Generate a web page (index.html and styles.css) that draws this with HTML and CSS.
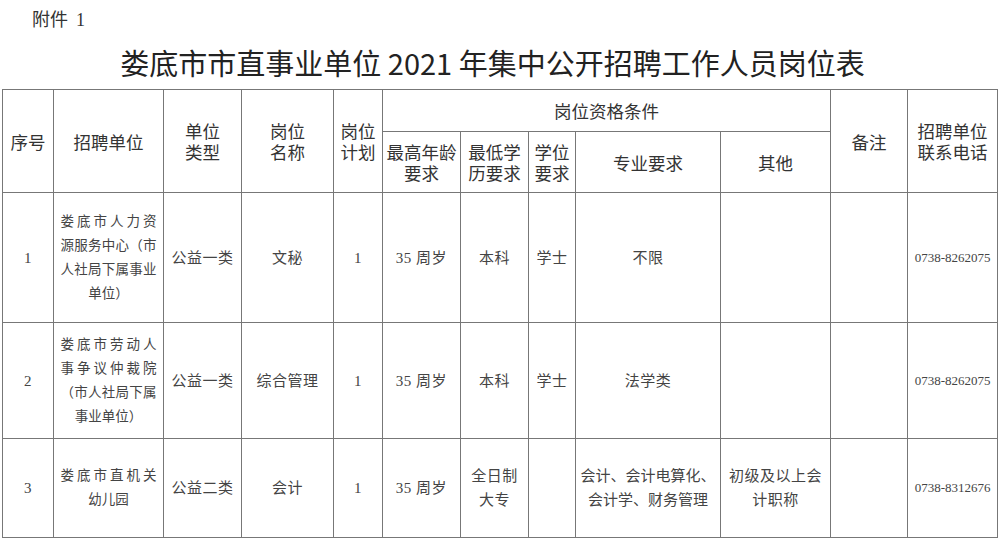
FILE: index.html
```html
<!DOCTYPE html>
<html lang="zh-CN">
<head>
<meta charset="utf-8">
<title>娄底市市直事业单位2021年集中公开招聘工作人员岗位表</title>
<link rel="stylesheet" href="styles.css">
</head>
<body>
<div class="doc">
  <div class="att">附件 <span class="num">1</span></div>
  <h1 class="title">娄底市市直事业单位 2021 年集中公开招聘工作人员岗位表</h1>
  <table class="grid">
    <colgroup>
      <col style="width:51px"><col style="width:110px"><col style="width:78px"><col style="width:92px">
      <col style="width:49px"><col style="width:78px"><col style="width:68px"><col style="width:47px">
      <col style="width:145px"><col style="width:110px"><col style="width:77px"><col style="width:90px">
    </colgroup>
    <thead>
      <tr class="hr1">
        <th rowspan="2">序号</th>
        <th rowspan="2">招聘单位</th>
        <th rowspan="2"><span class="ln">单位</span><span class="ln">类型</span></th>
        <th rowspan="2"><span class="ln">岗位</span><span class="ln">名称</span></th>
        <th rowspan="2"><span class="ln">岗位</span><span class="ln">计划</span></th>
        <th colspan="5">岗位资格条件</th>
        <th rowspan="2">备注</th>
        <th rowspan="2"><span class="ln">招聘单位</span><span class="ln">联系电话</span></th>
      </tr>
      <tr class="hr2">
        <th><span class="ln">最高年龄</span><span class="ln">要求</span></th>
        <th><span class="ln">最低学</span><span class="ln">历要求</span></th>
        <th><span class="ln">学位</span><span class="ln">要求</span></th>
        <th class="dark">专业要求</th>
        <th>其他</th>
      </tr>
    </thead>
    <tbody>
      <tr class="r1">
        <td class="num">1</td>
        <td><div class="unit"><span class="j">娄底市人力资</span><span class="j">源服务中心（市</span><span class="j">人社局下属事业</span><span>单位）</span></div></td>
        <td>公益一类</td>
        <td>文秘</td>
        <td class="num">1</td>
        <td><span class="num">35</span> 周岁</td>
        <td>本科</td>
        <td>学士</td>
        <td class="dark">不限</td>
        <td></td>
        <td></td>
        <td class="tel">0738-8262075</td>
      </tr>
      <tr class="r2">
        <td class="num">2</td>
        <td><div class="unit"><span class="j">娄底市劳动人</span><span class="j">事争议仲裁院</span><span class="j">（市人社局下属</span><span>事业单位）</span></div></td>
        <td>公益一类</td>
        <td>综合管理</td>
        <td class="num">1</td>
        <td><span class="num">35</span> 周岁</td>
        <td>本科</td>
        <td>学士</td>
        <td class="dark">法学类</td>
        <td></td>
        <td></td>
        <td class="tel">0738-8262075</td>
      </tr>
      <tr class="r3">
        <td class="num">3</td>
        <td><div class="unit"><span class="j">娄底市直机关</span><span>幼儿园</span></div></td>
        <td>公益二类</td>
        <td>会计</td>
        <td class="num">1</td>
        <td><span class="num">35</span> 周岁</td>
        <td><span class="ln">全日制</span><span class="ln">大专</span></td>
        <td></td>
        <td class="dark nw"><span class="ln">会计、会计电算化、</span><span class="ln">会计学、财务管理</span></td>
        <td><span class="ln">初级及以上会</span><span class="ln">计职称</span></td>
        <td></td>
        <td class="tel">0738-8312676</td>
      </tr>
    </tbody>
  </table>
</div>
</body>
</html>
```
FILE: styles.css
```css
html, body {
  margin: 0;
  padding: 0;
  background: #fff;
}
.doc {
  width: 1000px;
  height: 539px;
  overflow: hidden;
  font-family: "Noto Sans CJK SC", "Noto Sans", sans-serif;
  color: #333;
}
.att {
  margin: 8px 0 0 32px;
  font-size: 18px;
  line-height: 20px;
  color: #333;
}
.att .num {
  font-family: "Liberation Serif", serif;
  font-size: 18px;
  margin-left: 4px;
}
.title {
  margin: 14px 0 0 0;
  padding-right: 15px;
  text-align: center;
  font-size: 29px;
  line-height: 36px;
  font-weight: 400;
  color: #222;
}
.grid {
  margin: 9px 0 0 2px;
  width: 995px;
  table-layout: fixed;
  border-collapse: collapse;
}
.grid th,
.grid td {
  border: 1px solid #777;
  padding: 0;
  text-align: center;
  vertical-align: middle;
}
.grid th {
  font-weight: 400;
  font-size: 17.5px;
  line-height: 21px;
  color: #333;
}
.grid td {
  font-family: "Liberation Serif", "Noto Sans CJK SC", serif;
  font-size: 15px;
  line-height: 24px;
  letter-spacing: 0.5px;
  color: #444;
}
.ln {
  display: block;
}
.grid .dark {
  border-left-color: #111;
}
.hr1 { height: 42px; }
.hr2 { height: 61px; }
.r1 { height: 130px; }
.r2 { height: 116px; }
.r3 { height: 99px; }
.r3 td { border-top-color: #555; }
.num {
  font-family: "Liberation Serif", serif;
}
.grid td.num {
  font-size: 15px;
}
.tel {
  font-size: 13px !important;
  letter-spacing: 0 !important;
}
.nw {
  white-space: nowrap;
  letter-spacing: 0 !important;
}
.unit {
  width: 96px;
  margin: 0 auto;
  font-size: 13.5px;
  letter-spacing: 0;
}
.unit span {
  display: block;
  white-space: nowrap;
  text-align: center;
}
.unit span.j {
  text-align: justify;
  text-align-last: justify;
}
```
